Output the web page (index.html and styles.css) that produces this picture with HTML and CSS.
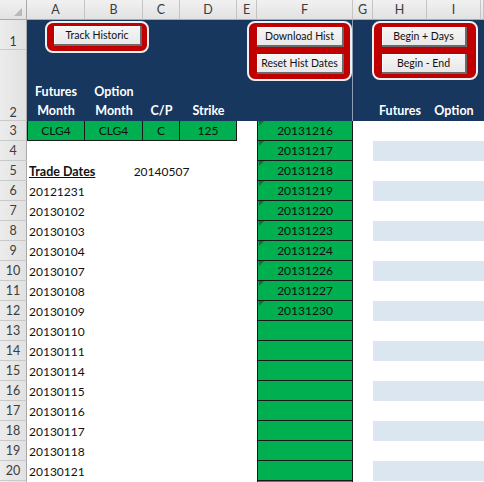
FILE: index.html
```html
<!DOCTYPE html>
<html lang="en">
<head>
    <meta charset="UTF-8">
    <title>Historic Tracker</title>
    <link rel="stylesheet" href="styles.css">
</head>
<body>
    <div class="sheet">
        <div class="row colhead">
            <div class="corner"></div>
            <div>A</div><div>B</div><div>C</div><div>D</div><div>E</div>
            <div>F</div><div>G</div><div>H</div><div>I</div><div></div>
        </div>

        <div class="row r1">
            <div class="rh">1</div>
            <div class="navy"></div>
        </div>

        <div class="row r2">
            <div class="rh">2</div>
            <div class="hd">Futures<br>Month</div>
            <div class="hd">Option<br>Month</div>
            <div class="hd">C/P</div>
            <div class="hd">Strike</div>
            <div class="hd"></div>
            <div class="hd"></div>
            <div class="hd"></div>
            <div class="hd">Futures</div>
            <div class="hd">Option</div>
            <div class="hd"></div>
        </div>

        <div class="row">
            <div class="rh">3</div>
            <div class="g">CLG4</div><div class="g">CLG4</div><div class="g">C</div><div class="g">125</div>
            <div></div>
            <div class="f mark">20131216</div>
            <div></div>
            <div class="tail"></div>
        </div>
        <div class="row band">
            <div class="rh">4</div><div class="a"></div><div class="pad"></div>
            <div class="f mark">20131217</div><div></div><div class="tail"></div>
        </div>
        <div class="row">
            <div class="rh">5</div>
            <div class="a title">Trade Dates</div>
            <div></div>
            <div class="mid">20140507</div>
            <div></div><div></div>
            <div class="f mark">20131218</div><div></div><div class="tail"></div>
        </div>
        <div class="row band">
            <div class="rh">6</div><div class="a">20121231</div><div class="pad"></div>
            <div class="f mark">20131219</div><div></div><div class="tail"></div>
        </div>
        <div class="row">
            <div class="rh">7</div><div class="a">20130102</div><div class="pad"></div>
            <div class="f mark">20131220</div><div></div><div class="tail"></div>
        </div>
        <div class="row band">
            <div class="rh">8</div><div class="a">20130103</div><div class="pad"></div>
            <div class="f mark">20131223</div><div></div><div class="tail"></div>
        </div>
        <div class="row">
            <div class="rh">9</div><div class="a">20130104</div><div class="pad"></div>
            <div class="f mark">20131224</div><div></div><div class="tail"></div>
        </div>
        <div class="row band">
            <div class="rh">10</div><div class="a">20130107</div><div class="pad"></div>
            <div class="f mark">20131226</div><div></div><div class="tail"></div>
        </div>
        <div class="row">
            <div class="rh">11</div><div class="a">20130108</div><div class="pad"></div>
            <div class="f mark">20131227</div><div></div><div class="tail"></div>
        </div>
        <div class="row band">
            <div class="rh">12</div><div class="a">20130109</div><div class="pad"></div>
            <div class="f mark">20131230</div><div></div><div class="tail"></div>
        </div>
        <div class="row">
            <div class="rh">13</div><div class="a">20130110</div><div class="pad"></div>
            <div class="f"></div><div></div><div class="tail"></div>
        </div>
        <div class="row band">
            <div class="rh">14</div><div class="a">20130111</div><div class="pad"></div>
            <div class="f"></div><div></div><div class="tail"></div>
        </div>
        <div class="row">
            <div class="rh">15</div><div class="a">20130114</div><div class="pad"></div>
            <div class="f"></div><div></div><div class="tail"></div>
        </div>
        <div class="row band">
            <div class="rh">16</div><div class="a">20130115</div><div class="pad"></div>
            <div class="f"></div><div></div><div class="tail"></div>
        </div>
        <div class="row">
            <div class="rh">17</div><div class="a">20130116</div><div class="pad"></div>
            <div class="f"></div><div></div><div class="tail"></div>
        </div>
        <div class="row band">
            <div class="rh">18</div><div class="a">20130117</div><div class="pad"></div>
            <div class="f"></div><div></div><div class="tail"></div>
        </div>
        <div class="row">
            <div class="rh">19</div><div class="a">20130118</div><div class="pad"></div>
            <div class="f"></div><div></div><div class="tail"></div>
        </div>
        <div class="row band">
            <div class="rh">20</div><div class="a">20130121</div><div class="pad"></div>
            <div class="f"></div><div></div><div class="tail"></div>
        </div>
        <div class="row">
            <div class="rh"></div><div class="a"></div><div class="pad"></div>
            <div class="f"></div><div></div><div class="tail"></div>
        </div>

        <!-- frozen pane line -->
        <div class="freeze"></div>

        <!-- macro buttons floating over the sheet -->
        <div class="btn-group track">
            <button class="btn">Track Historic</button>
        </div>
        <div class="btn-group hist">
            <button class="btn">Download Hist</button>
            <button class="btn">Reset Hist Dates</button>
        </div>
        <div class="btn-group begin">
            <button class="btn">Begin + Days</button>
            <button class="btn">Begin - End</button>
        </div>
    </div>
</body>
</html>
```

FILE: styles.css
```css
body {
    margin: 0;
    background: #fff;
    font-family: "Lato", "Open Sans", sans-serif;
    font-size: 12px;
    color: #111;
}

.sheet {
    position: relative;
    width: 484px;
    height: 482px;
    overflow: hidden;
}

.row {
    display: grid;
    grid-template-columns: 27px 58px 58px 37px 57px 20px 96px 20px 54px 54px 1fr;
    height: 20px;
}

.row > div {
    display: flex;
    align-items: center;
    white-space: nowrap;
    box-sizing: border-box;
    min-width: 0;
}

/* column letters */
.colhead > div {
    justify-content: center;
    background: linear-gradient(#f1f1f1, #e2e2e2);
    border-right: 1px solid #c4c4c4;
    border-bottom: 1px solid #a9a9a9;
    color: #3c3c3c;
    font-size: 12.5px;
}

.colhead .corner {
    position: relative;
    border-right-color: #a9a9a9;
}

.corner::after {
    content: "";
    position: absolute;
    right: 4px;
    bottom: 3px;
    border-left: 8px solid transparent;
    border-bottom: 8px solid #b9b9b9;
}

/* row numbers */
.rh {
    justify-content: center;
    background: linear-gradient(to right, #ececec, #e1e1e1);
    border-right: 1px solid #a9a9a9;
    border-bottom: 1px solid #c9c9c9;
    color: #3c3c3c;
    font-size: 12.5px;
}

.r1 {
    height: 30px;
}

.r2 {
    height: 71px;
}

.r1 .rh, .r2 .rh {
    align-items: flex-end;
    padding-bottom: 0;
}

.navy {
    grid-column: 2 / -1;
    background: #17375e;
}

.hd {
    background: #17375e;
    color: #fff;
    font-weight: 700;
    font-size: 12.5px;
    line-height: 19px;
    text-align: center;
    justify-content: center;
    align-items: flex-end !important;
    padding-bottom: 1px;
}

.g {
    justify-content: center;
    background: #00b050;
    border-right: 1px solid #1a1a1a;
    border-bottom: 1px solid #1a1a1a;
}

.row > .g:nth-child(2) {
    border-left: 1px solid #1a1a1a;
}

.a {
    padding-left: 2px;
    overflow: visible;
}

.title {
    font-weight: 700;
    text-decoration: underline;
    font-size: 12.5px;
}

.mid {
    justify-content: center;
}

.pad {
    grid-column: span 4;
}

.tail {
    grid-column: span 3;
}

.band .tail {
    background: #dce6f1;
}

.f {
    position: relative;
    justify-content: center;
    background: #00b050;
    border-left: 1px solid #1a1a1a;
    border-right: 1px solid #1a1a1a;
    border-bottom: 1px solid #1a1a1a;
}

.mark::before {
    content: "";
    position: absolute;
    left: 1px;
    top: 0;
    border-top: 5px solid #1b6b34;
    border-right: 5px solid transparent;
}

.freeze {
    position: absolute;
    left: 352px;
    top: 20px;
    width: 1px;
    height: 101px;
    background: #8f9fb3;
}

.btn-group {
    position: absolute;
    top: 21px;
    display: flex;
    flex-direction: column;
    gap: 7px;
    box-sizing: border-box;
    background: #c00000;
    border: 2px solid #f0f0f0;
    border-radius: 8px;
}

.track {
    left: 45px;
    width: 104px;
    height: 32px;
    padding: 3px 5px 0 7px;
}

.hist {
    left: 247px;
    width: 105px;
    height: 60px;
    padding: 4px 6px 0 8px;
}

.begin {
    left: 372px;
    width: 106px;
    height: 59px;
    padding: 4px 9px 0 8px;
}

.btn {
    height: 20px;
    padding: 0;
    background: linear-gradient(#f6f6f6, #e8e8e8);
    border: none;
    border-right: 2px solid #6a6a6a;
    border-bottom: 2px solid #6a6a6a;
    box-shadow: inset 1px 1px 0 #fff;
    font-family: "Lato", "Open Sans", sans-serif;
    font-size: 10.5px;
    color: #111;
}
```
